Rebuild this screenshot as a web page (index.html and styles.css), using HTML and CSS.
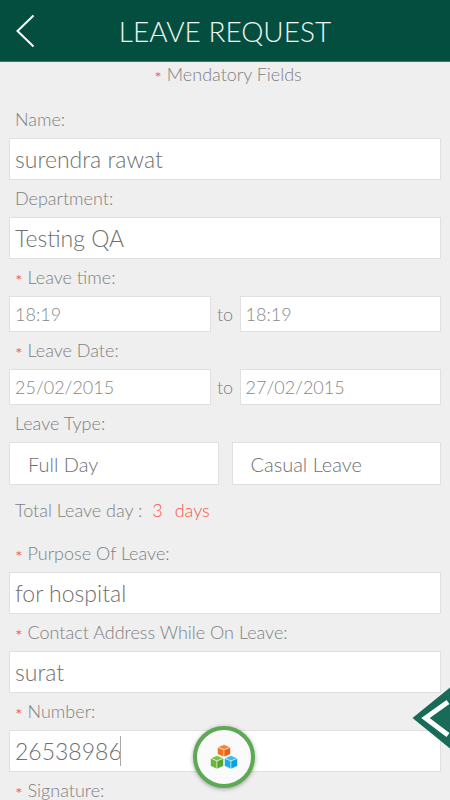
FILE: index.html
```html
<!DOCTYPE html>
<html lang="en">
<head>
  <meta charset="UTF-8"/>
  <meta name="viewport" content="width=device-width, initial-scale=1"/>
  <title>Leave Request</title>
  <link rel="stylesheet" href="styles.css">
</head>
<body>
  <header class="topbar">
    <button type="button" class="back" aria-label="Back">
      <svg width="20" height="36" viewBox="0 0 20 36"><path d="M18.500 2.500L2.500 18L18.500 33.500"/></svg>
    </button>
    <h1>LEAVE REQUEST</h1>
  </header>

  <main class="content">
    <p class="note"><span class="req">*</span> Mendatory Fields</p>

    <form class="form">
      <label for="name">Name:</label>
      <input type="text" id="name" value="surendra rawat"/>

      <label for="department">Department:</label>
      <input type="text" id="department" value="Testing QA"/>

      <label for="timeFrom"><span class="req">*</span> Leave time:</label>
      <div class="range">
        <input type="text" id="timeFrom" value="18:19"/>
        <label for="timeTo">to</label>
        <input type="text" id="timeTo" value="18:19"/>
      </div>

      <label for="dateFrom"><span class="req">*</span> Leave Date:</label>
      <div class="range">
        <input type="text" id="dateFrom" value="25/02/2015"/>
        <label for="dateTo">to</label>
        <input type="text" id="dateTo" value="27/02/2015"/>
      </div>

      <label for="dayType">Leave Type:</label>
      <div class="types">
        <select id="dayType">
          <option>Full Day</option>
          <option>Half Day</option>
        </select>
        <select id="leaveType" aria-label="Leave category">
          <option>Casual Leave</option>
          <option>Sick Leave</option>
        </select>
      </div>

      <p class="total">Total Leave day : <span class="days"><span>3</span><span>days</span></span></p>

      <label for="purpose"><span class="req">*</span> Purpose Of Leave:</label>
      <input type="text" id="purpose" value="for hospital"/>

      <label for="address"><span class="req">*</span> Contact Address While On Leave:</label>
      <input type="text" id="address" value="surat"/>

      <label for="number"><span class="req">*</span> Number:</label>
      <div class="active-field">
        <input type="text" id="number" value="26538986"/>
        <span class="caret"></span>
      </div>

      <p class="signature"><span class="req">*</span> Signature:</p>
    </form>
  </main>

  <button type="button" class="drawer" aria-label="Open side menu">
    <svg width="38" height="62" viewBox="0 0 38 62">
      <path d="M0.500 31L38 0.500V61.500Z" fill="#186a59"/>
      <path d="M36 15L13.500 31L36 48" fill="none" stroke="#fff" stroke-width="5"/>
    </svg>
  </button>

  <button type="button" class="menu" aria-label="Modules">
    <svg width="28" height="26" viewBox="0 0 28 26">
      <g stroke="#fff" stroke-width="0.500" stroke-linejoin="round">
        <!-- orange cube -->
        <path d="M14 0.500L20.500 3.200L14 6L7.500 3.200Z" fill="#f58634"/>
        <path d="M7.500 3.200L14 6V13L7.500 10.300Z" fill="#ee7424"/>
        <path d="M20.500 3.200L14 6V13L20.500 10.300Z" fill="#df6517"/>
        <!-- green cube -->
        <path d="M7 11.500L13.500 14.200L7 17L0.500 14.200Z" fill="#77c547"/>
        <path d="M0.500 14.200L7 17V25L0.500 22Z" fill="#67b83a"/>
        <path d="M13.500 14.200L7 17V25L13.500 22Z" fill="#58a52f"/>
        <!-- blue cube -->
        <path d="M21 11.500L27.500 14.200L21 17L14.500 14.200Z" fill="#35bdf2"/>
        <path d="M14.500 14.200L21 17V25L14.500 22Z" fill="#19afea"/>
        <path d="M27.500 14.200L21 17V25L27.500 22Z" fill="#109fdc"/>
      </g>
    </svg>
  </button>
</body>
</html>
```

FILE: styles.css
```css
* {
  box-sizing: border-box;
}
body {
  margin: 0;
  height: 100vh;
  display: flex;
  flex-direction: column;
  overflow: hidden;
  background: #efefef;
  color: #808080;
  font-family: Lato, sans-serif;
  font-weight: 300;
  font-size: 18px;
}
button {
  padding: 0;
  border: 0;
  background: none;
  cursor: pointer;
}
svg {
  display: block;
}

/* header */
.topbar {
  display: grid;
  grid-template-columns: 48px 1fr 48px;
  align-items: center;
  flex: none;
  height: 62px;
  background: #044e3f;
  border-bottom: 1px solid #4d6f66;
}
.back {
  padding-left: 15px;
}
.back path {
  fill: none;
  stroke: #fff;
  stroke-width: 2;
}
.topbar h1 {
  margin: 0;
  color: #f0f5f3;
  font-size: 28px;
  font-weight: 300;
  line-height: 36px;
  text-align: center;
}

/* form */
.content {
  flex: 1;
  min-height: 0;
  overflow-y: auto;
  scrollbar-width: none;
}
.note {
  margin: 0;
  padding-left: 6px;
  line-height: 25px;
  text-align: center;
}
.req {
  color: #e03a3a;
  line-height: 1;
  vertical-align: -4px;
}
.form {
  display: flex;
  flex-direction: column;
  padding: 14px 9px 0;
}
.form label,
.signature {
  margin: 0;
  padding: 0 6px;
  line-height: 37px;
}
.form input,
.form select {
  width: 100%;
  min-width: 0;
  height: 42px;
  margin: 0;
  padding: 0 5px;
  border: 1px solid #e0e0e0;
  border-radius: 0;
  outline: 0;
  background: #fff;
  color: #707070;
  font: inherit;
  font-size: 23px;
}
.range {
  display: grid;
  grid-template-columns: 1fr 29px 1fr;
}
.form .range input {
  height: 36px;
  font-size: 18px;
  color: #888;
}
.form .range label {
  padding: 0;
  line-height: 36px;
  text-align: center;
}
.types {
  display: grid;
  grid-template-columns: 1fr 1fr;
  gap: 13px;
}
.form .types select {
  appearance: none;
  height: 43px;
  padding: 0 18px;
  font-size: 20px;
}
.total {
  margin: 0;
  padding: 0 6px;
  line-height: 50px;
}
.days {
  display: inline-flex;
  gap: 12px;
  margin-left: 5px;
  color: #f4574a;
}
.active-field {
  position: relative;
}
.caret {
  position: absolute;
  top: 6px;
  left: 111px;
  width: 1px;
  height: 30px;
  background: #aaa;
}

/* floating buttons */
.drawer {
  position: fixed;
  right: 0;
  bottom: 51px;
}
.menu {
  position: fixed;
  left: 50%;
  bottom: 12px;
  display: flex;
  align-items: center;
  justify-content: center;
  width: 62px;
  height: 62px;
  margin-left: -32px;
  border: 4px solid #5da954;
  border-radius: 50%;
  background: #fafafa;
  box-shadow: 0 1px 4px rgba(0,0,0,0.35);
}
```
